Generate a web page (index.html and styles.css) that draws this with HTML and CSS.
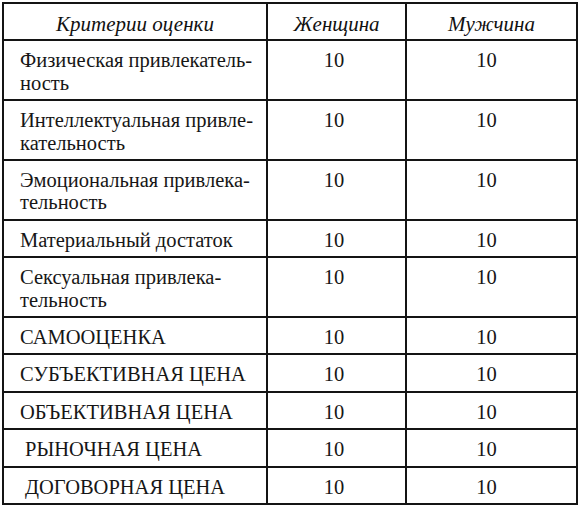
FILE: index.html
```html
<!DOCTYPE html>
<html lang="ru">
<head>
<meta charset="utf-8">
<title>Критерии оценки</title>
<link rel="stylesheet" href="styles.css">
</head>
<body>
<table class="grid">
  <colgroup>
    <col class="c1">
    <col class="c2">
    <col class="c3">
  </colgroup>
  <thead>
    <tr>
      <th>Критерии оценки</th>
      <th>Женщина</th>
      <th>Мужчина</th>
    </tr>
  </thead>
  <tbody>
    <tr><td class="name">Физическая привлекатель-<br>ность</td><td class="num">10</td><td class="num alt">10</td></tr>
    <tr><td class="name">Интеллектуальная привле-<br>кательность</td><td class="num">10</td><td class="num alt">10</td></tr>
    <tr><td class="name">Эмоциональная привлека-<br>тельность</td><td class="num">10</td><td class="num alt">10</td></tr>
    <tr><td class="name">Материальный достаток</td><td class="num">10</td><td class="num alt">10</td></tr>
    <tr><td class="name">Сексуальная привлека-<br>тельность</td><td class="num">10</td><td class="num alt">10</td></tr>
    <tr><td class="name">САМООЦЕНКА</td><td class="num">10</td><td class="num alt">10</td></tr>
    <tr><td class="name">СУБЪЕКТИВНАЯ ЦЕНА</td><td class="num">10</td><td class="num alt">10</td></tr>
    <tr><td class="name">ОБЪЕКТИВНАЯ ЦЕНА</td><td class="num">10</td><td class="num alt">10</td></tr>
    <tr><td class="name indent">РЫНОЧНАЯ ЦЕНА</td><td class="num">10</td><td class="num alt">10</td></tr>
    <tr><td class="name indent">ДОГОВОРНАЯ ЦЕНА</td><td class="num">10</td><td class="num alt">10</td></tr>
  </tbody>
</table>
</body>
</html>
```

FILE: styles.css
```css
html, body {
  margin: 0;
  padding: 0;
  background: #ffffff;
}

body {
  padding: 2px 0 0 2px;
  font-family: "Liberation Serif", "DejaVu Serif", serif;
  font-size: 20.5px;
  color: #161616;
}

.grid {
  border-collapse: collapse;
  table-layout: fixed;
  width: 574px;
}

.c1 { width: 264px; }
.c2 { width: 139px; }
.c3 { width: 171px; }

.grid th,
.grid td {
  border: 2px solid #141414;
  line-height: 22.4px;
  padding: 8px 8px 5px 8px;
  vertical-align: top;
}

.grid th {
  font-style: italic;
  font-weight: normal;
  font-size: 21px;
  text-align: center;
  padding-top: 9px;
  padding-bottom: 4px;
  color: #111111;
}

.grid td.name {
  padding-left: 16px;
  text-align: left;
}

.grid td.indent {
  padding-left: 21px;
}

.grid td.num {
  text-align: center;
  padding-right: 13px;
}

.grid td.alt {
  padding-right: 18px;
}
```
